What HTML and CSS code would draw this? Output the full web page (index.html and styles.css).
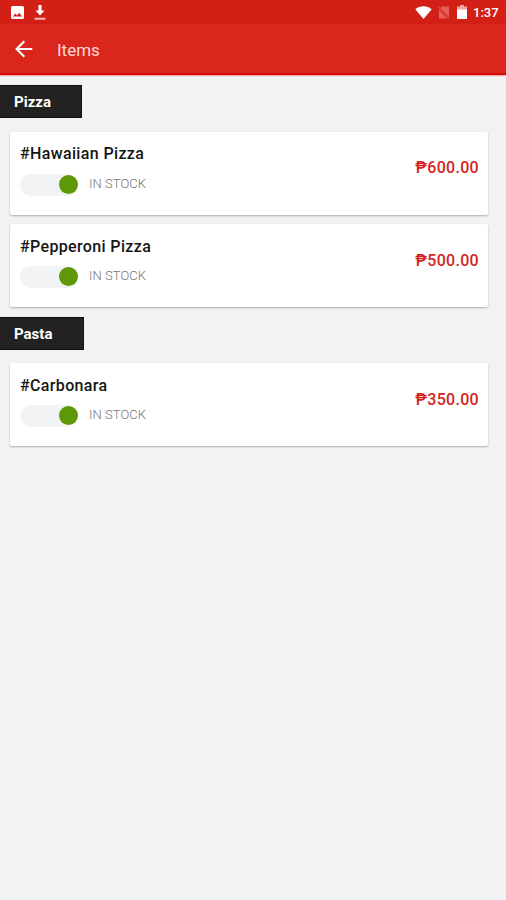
FILE: index.html
```html
<!DOCTYPE html>
<html lang="en">
<head>
<meta charset="utf-8">
<title>Items</title>
<link rel="stylesheet" href="styles.css">
</head>
<body>
<div class="status">
  <svg class="ic-photo" viewBox="0 0 13 13"><path fill="#fff" fill-rule="evenodd" d="M1.500 0h10A1.500 1.500 0 0 1 13 1.500v10a1.500 1.500 0 0 1-1.500 1.500h-10A1.500 1.500 0 0 1 0 11.500v-10A1.500 1.500 0 0 1 1.500 0zM2 10.500h9L8.200 6.700 6 9.400 4.300 7.500z"/></svg>
  <svg class="ic-down" viewBox="0 0 12 15"><path fill="#fff" d="M4.500 0h3v5.500h3L6 10.500 1.500 5.500h3z"/><path fill="#f5b9b5" d="M.5 12.700h11v2H.5z"/></svg>
  <span class="spacer"></span>
  <svg class="ic-wifi" viewBox="0 0 17 13"><path fill="#fff" d="M8.500 13 .3 3.300C4.500-.8 12.500-.8 16.700 3.300z"/></svg>
  <svg class="ic-sim" viewBox="0 0 12 13"><path fill="#e4605a" d="M3.300.5H11V11L2.500 2zM1 3.700 9.600 12.500H1z"/><path stroke="#e4605a" d="m.5 1 11 11.500"/></svg>
  <svg class="ic-batt" viewBox="0 0 10 14"><path fill="#f2a6a1" d="M3 0h4v1.500h3V5H0V1.500h3z"/><path fill="#fff" d="M0 4.500h10V14H0z"/></svg>
  <span class="clock">1:37</span>
</div>
<header class="appbar">
  <svg class="back" viewBox="0 0 18 18"><path fill="none" stroke="#fff" stroke-width="2.100" d="M17.300 9H2M9.300 1.300 1.600 9l7.700 7.700"/></svg>
  <h1>Items</h1>
</header>
<main>
  <h2 class="label pizza">Pizza</h2>
  <article class="card">
    <div><h3>#Hawaiian Pizza</h3><div class="stock"><span class="switch"></span><span class="state">IN STOCK</span></div></div>
    <span class="price">₱600.00</span>
  </article>
  <article class="card low">
    <div><h3>#Pepperoni Pizza</h3><div class="stock"><span class="switch"></span><span class="state">IN STOCK</span></div></div>
    <span class="price">₱500.00</span>
  </article>
  <h2 class="label pasta">Pasta</h2>
  <article class="card low">
    <div><h3>#Carbonara</h3><div class="stock"><span class="switch"></span><span class="state">IN STOCK</span></div></div>
    <span class="price">₱350.00</span>
  </article>
</main>
</body>
</html>
```
FILE: styles.css
```css
* { box-sizing: border-box; }
body { margin: 0; height: 900px; background: #f0f2f4; font-family: Roboto, "Liberation Sans", sans-serif; }
h1, h2, h3 { margin: 0; }
svg { display: block; flex: none; }
.status { height: 24px; background: #d32017; display: flex; align-items: center; padding: 0 7px 0 11px; }
.ic-photo { width: 13px; height: 13px; }
.ic-down { width: 12px; height: 15px; margin-left: 10px; }
.spacer { flex: 1; }
.ic-wifi { width: 17px; height: 13px; margin-right: 6px; }
.ic-sim { width: 12px; height: 13px; margin-right: 7px; }
.ic-batt { width: 10px; height: 14px; margin-right: 6px; }
.clock { width: 26px; color: #fff; font-size: 13px; font-weight: 500; line-height: 24px; padding-top: 1px; white-space: nowrap; }
.appbar { height: 51px; background: #db261d; border-bottom: 2px solid #d40f0b; box-shadow: 0 1px 1px #f3aaa5; display: flex; align-items: center; padding-left: 15px; }
.back { width: 18px; height: 18px; }
.appbar h1 { margin-left: 24px; color: #fbd9d6; font-size: 17px; font-weight: 400; line-height: 24px; padding-top: 2px; }
main { padding-top: 10px; }
.label { height: 33px; padding-left: 14px; border: 1px solid #111; border-left: 0; background: #222; color: #fff; font-size: 15px; font-weight: 700; line-height: 33px; }
.pizza { width: 82px; margin-bottom: 14px; }
.pasta { width: 84px; margin: 10px 0 13px; }
.card { height: 83px; margin: 0 18px 9px 10px; padding: 12px 9px 0 10px; display: flex; justify-content: space-between; background: #fff; border-radius: 2px; box-shadow: 0 1px 2px rgba(0, 0, 0, .28); }
.card.low { padding-top: 13px; }
.card h3 { font-size: 16px; font-weight: 500; line-height: 20px; color: #151515; white-space: nowrap; letter-spacing: .36px; }
.stock { display: flex; align-items: center; height: 22px; margin-top: 10px; }
.low .stock { margin-top: 9px; }
.switch { width: 58px; height: 22px; border-radius: 11px; background: #f1f3f4; display: flex; align-items: center; justify-content: flex-end; }
.switch::after { content: ""; width: 19px; height: 19px; margin: 0 .5px 1px 0; border-radius: 50%; background: #5f9808; }
.state { margin-left: 11px; color: #777; font-size: 13px; font-weight: 300; line-height: 20px; padding-bottom: 2px; letter-spacing: .05px; }
.price { margin-top: 14px; color: #d3241d; font-size: 16px; font-weight: 500; line-height: 20px; letter-spacing: .3px; }
```
